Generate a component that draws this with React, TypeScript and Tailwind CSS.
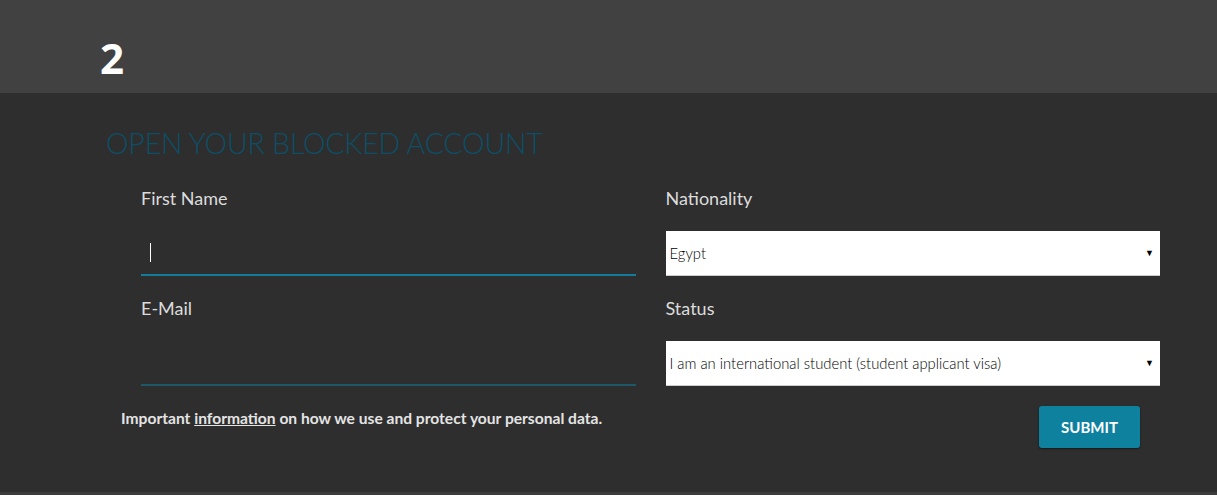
export default function App() {
  const font = { fontFamily: 'Lato, "Open Sans", sans-serif' };
  return (
    <div className="w-[1217px] h-[495px] bg-[#2e2e2e] flex flex-col overflow-hidden" style={font}>
      <header className="h-[93px] bg-[#414141] flex items-center pl-[100px] shrink-0">
        <span className="text-white text-[42px] font-bold leading-none mt-[22px] font-['Open_Sans',sans-serif]">2</span>
      </header>
      <main className="flex-1 flex flex-col">
        <h1 className="ml-[106px] mt-[34px] text-[28.5px] font-light leading-[32px] text-[#0c4e67] tracking-[-0.2px]">OPEN YOUR BLOCKED ACCOUNT</h1>
        <div className="ml-[141px] w-[1019px] mt-[28px] grid grid-cols-2 gap-x-[30px]">
          <Field label="First Name">
            <div className="h-[45px] border-b-2 border-[#157b9c] flex items-center pl-[9px]">
              <span className="w-px h-[19px] bg-white" />
            </div>
          </Field>
          <Field label="Nationality">
            <Select value="Egypt" />
          </Field>
          <Field label="E-Mail">
            <div className="h-[45px] border-b-2 border-[#1e566a]" />
          </Field>
          <Field label="Status">
            <Select value="I am an international student (student applicant visa)" />
          </Field>
        </div>
        <div className="flex items-start justify-between ml-[121px] mr-[77px] mt-[-1px]">
          <p className="text-[15.6px] font-bold text-[#e4e4e4] mt-[1px]">
            Important <a className="underline">information</a> on how we use and protect your personal data.
          </p>
          <button className="w-[101px] h-[42px] bg-[#0e819f] rounded-[3px] text-white text-[15px] font-bold shadow-[0_1px_2px_rgba(0,0,0,0.5)]">SUBMIT</button>
        </div>
      </main>
      <div className="h-[3px] bg-[#3c3c3c] shrink-0" />
    </div>
  );
}

function Field({ label, children }: { label: string; children: React.ReactNode }) {
  return (
    <div className="flex flex-col">
      <label className="h-[22px] text-[18px] leading-[22px] text-[#dcdcdc] mb-[22px]">{label}</label>
      <div>{children}</div>
      <div className="h-[21px]" />
    </div>
  );
}

function Select({ value }: { value: string }) {
  return (
    <div className="h-[45px] bg-white border-b border-[#ccc] flex items-center justify-between pl-[4px] pr-[6px]">
      <span className="text-[14.8px] font-light text-black">{value}</span>
      <span className="text-[9px] text-black">▼</span>
    </div>
  );
}
